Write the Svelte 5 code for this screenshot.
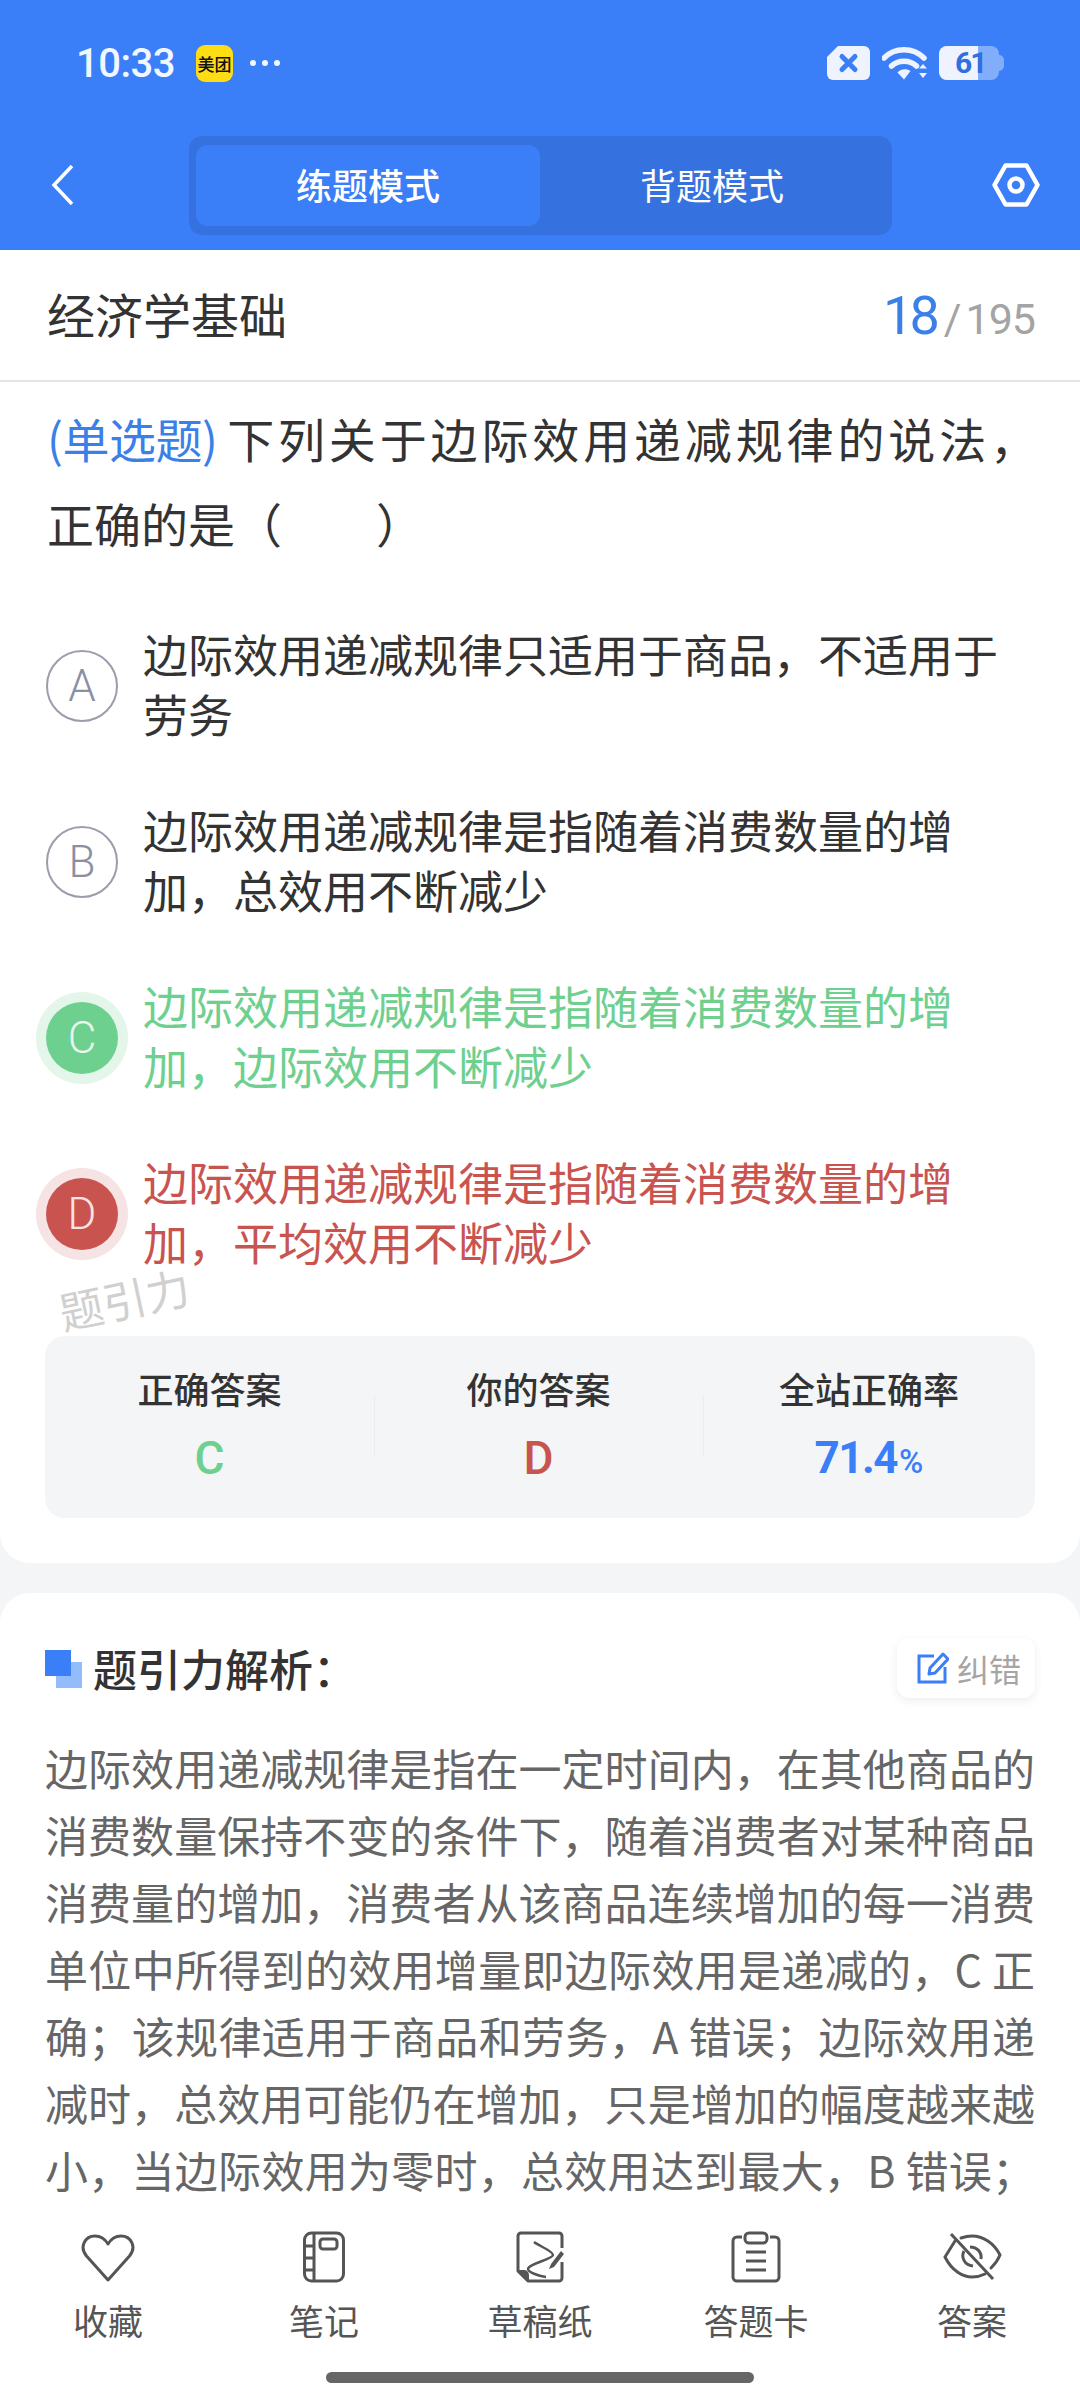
<script>
  const options = [
    { key: 'A', text: '边际效用递减规律只适用于商品，不适用于劳务', state: '' },
    { key: 'B', text: '边际效用递减规律是指随着消费数量的增加，总效用不断减少', state: '' },
    { key: 'C', text: '边际效用递减规律是指随着消费数量的增加，边际效用不断减少', state: 'right' },
    { key: 'D', text: '边际效用递减规律是指随着消费数量的增加，平均效用不断减少', state: 'wrong' }
  ];
</script>

<div class="phone">
  <header class="top">
    <div class="status">
      <div class="status-left">
        <span class="time">10:33</span>
        <span class="mt">美团</span>
        <span class="dots"><i></i><i></i><i></i></span>
      </div>
      <div class="status-right">
        <svg width="43" height="34" viewBox="0 0 43 34">
          <path d="M11 0H37a6 6 0 0 1 6 6V28a6 6 0 0 1-6 6H6a6 6 0 0 1-6-6V11Z" fill="#eef3fe"/>
          <path d="M15 10.500 28 23.500M28 10.500 15 23.500" stroke="#3b7ff8" stroke-width="5" stroke-linecap="round"/>
        </svg>
        <svg width="46" height="34" viewBox="0 0 46 34">
          <path d="M2 12C13 1 31 1 42 12" fill="none" stroke="#eef3fe" stroke-width="5.500" stroke-linecap="round"/>
          <path d="M9.500 20C16 13.500 28 13.500 34.500 20" fill="none" stroke="#eef3fe" stroke-width="5.500" stroke-linecap="round"/>
          <path d="M15.500 26.500C19 22.500 25 22.500 28.500 25L22 33.500Z" fill="#eef3fe"/>
          <path d="M37 22.500 41 18l4 4.500ZM37 27 41 32l4-5Z" fill="#eef3fe"/>
        </svg>
        <span class="battery"><span class="fill"></span><span class="cap"></span><span class="lvl">61</span></span>
      </div>
    </div>
    <nav class="bar">
      <svg class="back" width="24" height="42" viewBox="0 0 24 42">
        <path d="M21 2 3 21l18 19" fill="none" stroke="#fff" stroke-width="3.500"/>
      </svg>
      <div class="tabs">
        <div class="tab active">练题模式</div>
        <div class="tab">背题模式</div>
      </div>
      <svg class="gear" width="48" height="44" viewBox="0 0 48 44">
        <path d="M13.500 2.500H34.500L45.500 22 34.500 41.500H13.500L2.500 22Z" fill="none" stroke="#fff" stroke-width="4.500" stroke-linejoin="round"/>
        <circle cx="24" cy="22" r="6.500" fill="none" stroke="#fff" stroke-width="4.500"/>
      </svg>
    </nav>
  </header>

  <div class="title-row">
    <span class="subject">经济学基础</span>
    <span class="count"><b>18</b><em>/</em><span class="total">195</span></span>
  </div>

  <section class="card main">
    <div class="question">
      <div class="q1"><span class="tag">(单选题)</span>下列关于边际效用递减规律的说法，</div>
      <div>正确的是（　　）</div>
    </div>

    <ul class="options">
      {#each options as o}
        <li class="opt {o.state}">
          <span class="bubble">{o.key}</span>
          <span class="otext">{o.text}</span>
        </li>
      {/each}
      <li class="mark">题引力</li>
    </ul>

    <div class="stats">
      <div class="stat"><span class="lab">正确答案</span><span class="val green">C</span></div>
      <div class="stat"><span class="lab">你的答案</span><span class="val red">D</span></div>
      <div class="stat"><span class="lab">全站正确率</span><span class="val blue">71.4<small>%</small></span></div>
    </div>
  </section>

  <section class="card explain">
    <div class="eh">
      <div class="eh-left">
        <span class="squares"><i class="s2"></i><i class="s1"></i></span>
        <h2>题引力解析：</h2>
      </div>
      <div class="fix">
        <svg width="32" height="32" viewBox="0 0 32 32">
          <path d="M17 4H2v26h26V15" fill="none" stroke="#3b7ff8" stroke-width="3"/>
          <path d="M12 22l1-6L26 2l5 5-13 14Z" fill="none" stroke="#3b7ff8" stroke-width="3" stroke-linejoin="round"/>
        </svg>
        <span>纠错</span>
      </div>
    </div>
    <p>边际效用递减规律是指在一定时间内，在其他商品的消费数量保持不变的条件下，随着消费者对某种商品消费量的增加，消费者从该商品连续增加的每一消费单位中所得到的效用增量即边际效用是递减的，C 正确；该规律适用于商品和劳务，A 错误；边际效用递减时，总效用可能仍在增加，只是增加的幅度越来越小，当边际效用为零时，总效用达到最大，B 错误；</p>
  </section>

  <footer class="dock">
    <div class="items">
      <div class="item">
        <svg width="56" height="52" viewBox="0 0 56 52">
          <path d="M28 49 6.500 25C-1 16 5 5 15 5c6 0 10 3 13 8 3-5 7-8 13-8 10 0 16 11 8.500 20Z" fill="none" stroke="#555" stroke-width="3" stroke-linejoin="round"/>
        </svg>
        <span>收藏</span>
      </div>
      <div class="item">
        <svg width="56" height="52" viewBox="0 0 56 52">
          <rect x="8.500" y="2" width="39" height="48" rx="7" fill="none" stroke="#555" stroke-width="3"/>
          <path d="M18 2v48M8.500 15H18M8.500 27H18M8.500 39H18" fill="none" stroke="#555" stroke-width="3"/>
          <rect x="24" y="8" width="17" height="10" rx="3" fill="none" stroke="#555" stroke-width="3"/>
        </svg>
        <span>笔记</span>
      </div>
      <div class="item">
        <svg width="56" height="52" viewBox="0 0 56 52">
          <path d="M50 17V5a3 3 0 0 0-3-3H9a3 3 0 0 0-3 3V40L16 50H47a3 3 0 0 0 3-3V31" fill="none" stroke="#555" stroke-width="3" stroke-linejoin="round"/>
          <path d="M6 40h6a4 4 0 0 1 4 4v6Z" fill="#555" stroke="#555" stroke-width="2" stroke-linejoin="round"/>
          <path d="M22 11c5 4 19 9 19 13s-25 9-25 14c0 3 10 7 18 8" fill="none" stroke="#555" stroke-width="2.500"/>
          <path d="M49 20 39 33l-2 5 5-2 10-13Z" fill="#555"/>
        </svg>
        <span>草稿纸</span>
      </div>
      <div class="item">
        <svg width="56" height="52" viewBox="0 0 56 52">
          <path d="M14 6H9a4 4 0 0 0-4 4V46a4 4 0 0 0 4 4H47a4 4 0 0 0 4-4V10a4 4 0 0 0-4-4H42" fill="none" stroke="#555" stroke-width="3"/>
          <rect x="17" y="2" width="22" height="10" rx="4" fill="none" stroke="#555" stroke-width="3"/>
          <path d="M18 21H38M18 30H38M18 39H38" fill="none" stroke="#555" stroke-width="3"/>
        </svg>
        <span>答题卡</span>
      </div>
      <div class="item">
        <svg width="60" height="46" viewBox="0 0 60 46">
          <path d="M13 7 3 23c7 14 18 20 27 20 5 0 9-1 13-3M19 4c3-1 7-2 11-2 11 0 22 7 28 19-2 5-5 9-9 13" fill="none" stroke="#555" stroke-width="3" stroke-linecap="round"/>
          <path d="M22 17c-3 6 0 14 9 15M28 13c7 0 12 5 11 12" fill="none" stroke="#555" stroke-width="3"/>
          <path d="M9 0 51 45" stroke="#555" stroke-width="3"/>
        </svg>
        <span>答案</span>
      </div>
    </div>
    <div class="home"></div>
  </footer>
</div>

<style>
  :global(body) {
    margin: 0;
  }
  .phone {
    position: relative;
    width: 1080px;
    height: 2400px;
    overflow: hidden;
    background: #f4f5f7;
    font-family: "Noto Sans CJK SC", "Noto Sans", sans-serif;
    color: #333;
  }
  .top {
    height: 250px;
    background: #3b7ff8;
    color: #fff;
  }
  .status {
    height: 126px;
    display: flex;
    align-items: center;
    justify-content: space-between;
    padding: 0 76px 0 76px;
  }
  .status-left {
    display: flex;
    align-items: center;
  }
  .time {
    font-family: Roboto, sans-serif;
    font-weight: 500;
    font-size: 40px;
    letter-spacing: -0.5px;
    width: 120px;
    color: #f2f6ff;
  }
  .mt {
    width: 37px;
    height: 37px;
    background: #ffdd14;
    border-radius: 9px;
    color: #111;
    font-size: 17px;
    font-weight: 500;
    line-height: 37px;
    text-align: center;
    white-space: nowrap;
  }
  .dots {
    display: flex;
    gap: 6px;
    margin-left: 17px;
  }
  .dots i {
    width: 6px;
    height: 6px;
    border-radius: 50%;
    background: #f2f6ff;
  }
  .status-right {
    display: flex;
    align-items: center;
    gap: 12px;
  }
  .battery {
    position: relative;
    width: 65px;
    height: 34px;
    margin-left: -1px;
  }
  .battery .cap {
    position: absolute;
    inset: 0 5px 0 0;
    border-radius: 8px;
    background: rgba(238, 243, 254, 0.4);
  }
  .battery .cap::after {
    content: "";
    position: absolute;
    right: -5px;
    top: 9px;
    width: 5px;
    height: 16px;
    border-radius: 0 5px 5px 0;
    background: rgba(238, 243, 254, 0.4);
  }
  .battery .fill {
    position: absolute;
    z-index: 1;
    left: 0;
    top: 0;
    bottom: 0;
    width: 39px;
    background: #eef3fe;
    border-radius: 8px 0 0 8px;
  }
  .battery .lvl {
    position: absolute;
    z-index: 2;
    left: 16px;
    top: 0;
    font-family: Roboto, sans-serif;
    font-weight: 700;
    font-size: 30px;
    line-height: 34px;
    color: #2f6fe0;
    letter-spacing: -2px;
  }
  .bar {
    height: 124px;
    display: flex;
    align-items: center;
    position: relative;
    padding: 0 40px 6px 51px;
    justify-content: space-between;
    box-sizing: border-box;
  }
  .tabs {
    width: 703px;
    height: 99px;
    box-sizing: border-box;
    padding: 9px 7px;
    background: #3672df;
    border-radius: 13px;
    display: flex;
    margin-left: 14px;
  }
  .tab {
    width: 344px;
    text-align: center;
    font-size: 36px;
    line-height: 79px;
    font-weight: 500;
    border-radius: 12px;
    flex: none;
  }
  .tab + .tab {
    width: 344px;
    font-weight: 400;
  }
  .tab.active {
    background: #3b7ff8;
  }
  .title-row {
    height: 130px;
    background: #fff;
    border-bottom: 2px solid #e4e4e4;
    box-sizing: content-box;
    display: flex;
    align-items: center;
    justify-content: space-between;
    padding: 0 45px 0 47px;
  }
  .subject {
    font-size: 48px;
    line-height: 56px;
    padding-bottom: 4px;
    color: #333;
  }
  .count {
    display: flex;
    align-items: baseline;
    font-family: Roboto, sans-serif;
    color: #a4a4a4;
    font-size: 43px;
  }
  .total {
    letter-spacing: -1px;
  }
  .count b {
    font-weight: 400;
    font-size: 54px;
    letter-spacing: -4px;
    color: #3b7fe8;
    margin-right: 8px;
  }
  .count em {
    font-style: normal;
    margin-right: 4px;
  }
  .card {
    background: #fff;
  }
  .main {
    border-radius: 0 0 30px 30px;
    padding: 13px 45px 45px 47px;
    margin-bottom: 30px;
  }
  .question {
    font-size: 47px;
    line-height: 85px;
    color: #333;
  }
  .q1 {
    text-align: justify;
    text-align-last: justify;
    margin-right: -2px;
  }
  .tag {
    display: inline-block;
    color: #3b7fe8;
    margin-right: 6px;
    letter-spacing: -0.500px;
  }
  .options {
    list-style: none;
    margin: 59px 0 0;
    padding: 0;
    display: flex;
    flex-direction: column;
    gap: 52px;
    position: relative;
  }
  .opt {
    display: flex;
    align-items: center;
    gap: 25px;
    font-size: 45px;
    line-height: 60px;
    color: #333;
  }
  .otext {
    width: 880px;
    flex: none;
    padding-bottom: 4px;
  }
  .bubble {
    width: 72px;
    height: 72px;
    flex: none;
    margin-left: -1px;
    box-sizing: border-box;
    border: 2px solid #9a9dab;
    border-radius: 50%;
    display: flex;
    align-items: center;
    justify-content: center;
    font-family: Roboto, sans-serif;
    font-weight: 300;
    font-size: 44px;
    color: #8b8fa3;
  }
  .right {
    color: #6ed08e;
  }
  .wrong {
    color: #c9544f;
  }
  .right .bubble {
    background: #6ed08e;
    border: 0;
    color: #e8f8ed;
    box-shadow: 0 0 0 10px #e4f6ea;
  }
  .wrong .bubble {
    background: #c9544f;
    border: 0;
    color: #f9e4e3;
    box-shadow: 0 0 0 10px #f6e3e3;
  }
  .mark {
    position: absolute;
    left: 11px;
    bottom: -46px;
    font-size: 44px;
    line-height: 48px;
    color: #d0d0d0;
    transform: rotate(-12deg);
  }
  .stats {
    margin: 60px 0 0 -2px;
    height: 182px;
    background: #f4f5f7;
    border-radius: 20px;
    display: grid;
    grid-template-columns: 329px 329px 332px;
  }
  .stat {
    position: relative;
    display: flex;
    flex-direction: column;
    align-items: center;
    padding-top: 26px;
  }
  .stat + .stat::before {
    content: "";
    position: absolute;
    left: 0;
    top: 59px;
    height: 62px;
    width: 1px;
    background: #ebecef;
  }
  .lab {
    font-size: 36px;
    line-height: 52px;
    font-weight: 500;
    color: #333;
  }
  .val {
    margin-top: 16px;
    font-family: Roboto, sans-serif;
    font-size: 46px;
    line-height: 56px;
    font-weight: 500;
  }
  .green {
    color: #6ed08e;
  }
  .red {
    color: #c9544f;
  }
  .blue {
    color: #3b7ff8;
    font-weight: 700;
    font-size: 44px;
    letter-spacing: -1.500px;
  }
  .blue small {
    font-size: 33px;
    font-weight: 500;
    letter-spacing: 0;
    margin-left: 2px;
  }
  .explain {
    border-radius: 30px 30px 0 0;
    padding: 45px 45px 0;
    height: 800px;
  }
  .eh {
    display: flex;
    justify-content: space-between;
    align-items: center;
    height: 60px;
  }
  .eh-left {
    display: flex;
    align-items: center;
  }
  .squares {
    position: relative;
    width: 37px;
    height: 37px;
    margin-right: 11px;
  }
  .squares i {
    position: absolute;
    width: 26px;
    height: 26px;
  }
  .s1 {
    left: 0;
    top: 0;
    background: #3b7ff8;
  }
  .s2 {
    left: 11px;
    top: 12px;
    background: #93bcfb;
  }
  h2 {
    margin: 0;
    font-size: 44px;
    font-weight: 500;
    color: #333;
    line-height: 60px;
  }
  .fix {
    width: 138px;
    height: 60px;
    box-sizing: border-box;
    padding-left: 20px;
    display: flex;
    align-items: center;
    gap: 8px;
    border-radius: 12px;
    background: #fff;
    box-shadow: 0 3px 10px rgba(0, 0, 0, 0.07);
    font-size: 32px;
    color: #a5a5a5;
  }
  .explain p {
    margin: 36px 0 0;
    font-size: 43px;
    line-height: 67px;
    color: #666;
    text-align: justify;
    text-align-last: justify;
  }
  .dock {
    position: absolute;
    left: 0;
    right: 0;
    bottom: 0;
    height: 185px;
    background: #fff;
  }
  .items {
    display: grid;
    grid-template-columns: repeat(5, 216px);
    padding-top: 16px;
  }
  .item {
    display: flex;
    flex-direction: column;
    align-items: center;
    font-size: 35px;
    color: #555;
  }
  .item svg {
    height: 52px;
    display: block;
  }
  .item span {
    margin-top: 12px;
    line-height: 50px;
  }
  .home {
    position: absolute;
    left: 326px;
    top: 157px;
    width: 428px;
    height: 11px;
    border-radius: 6px;
    background: #666;
  }
</style>
